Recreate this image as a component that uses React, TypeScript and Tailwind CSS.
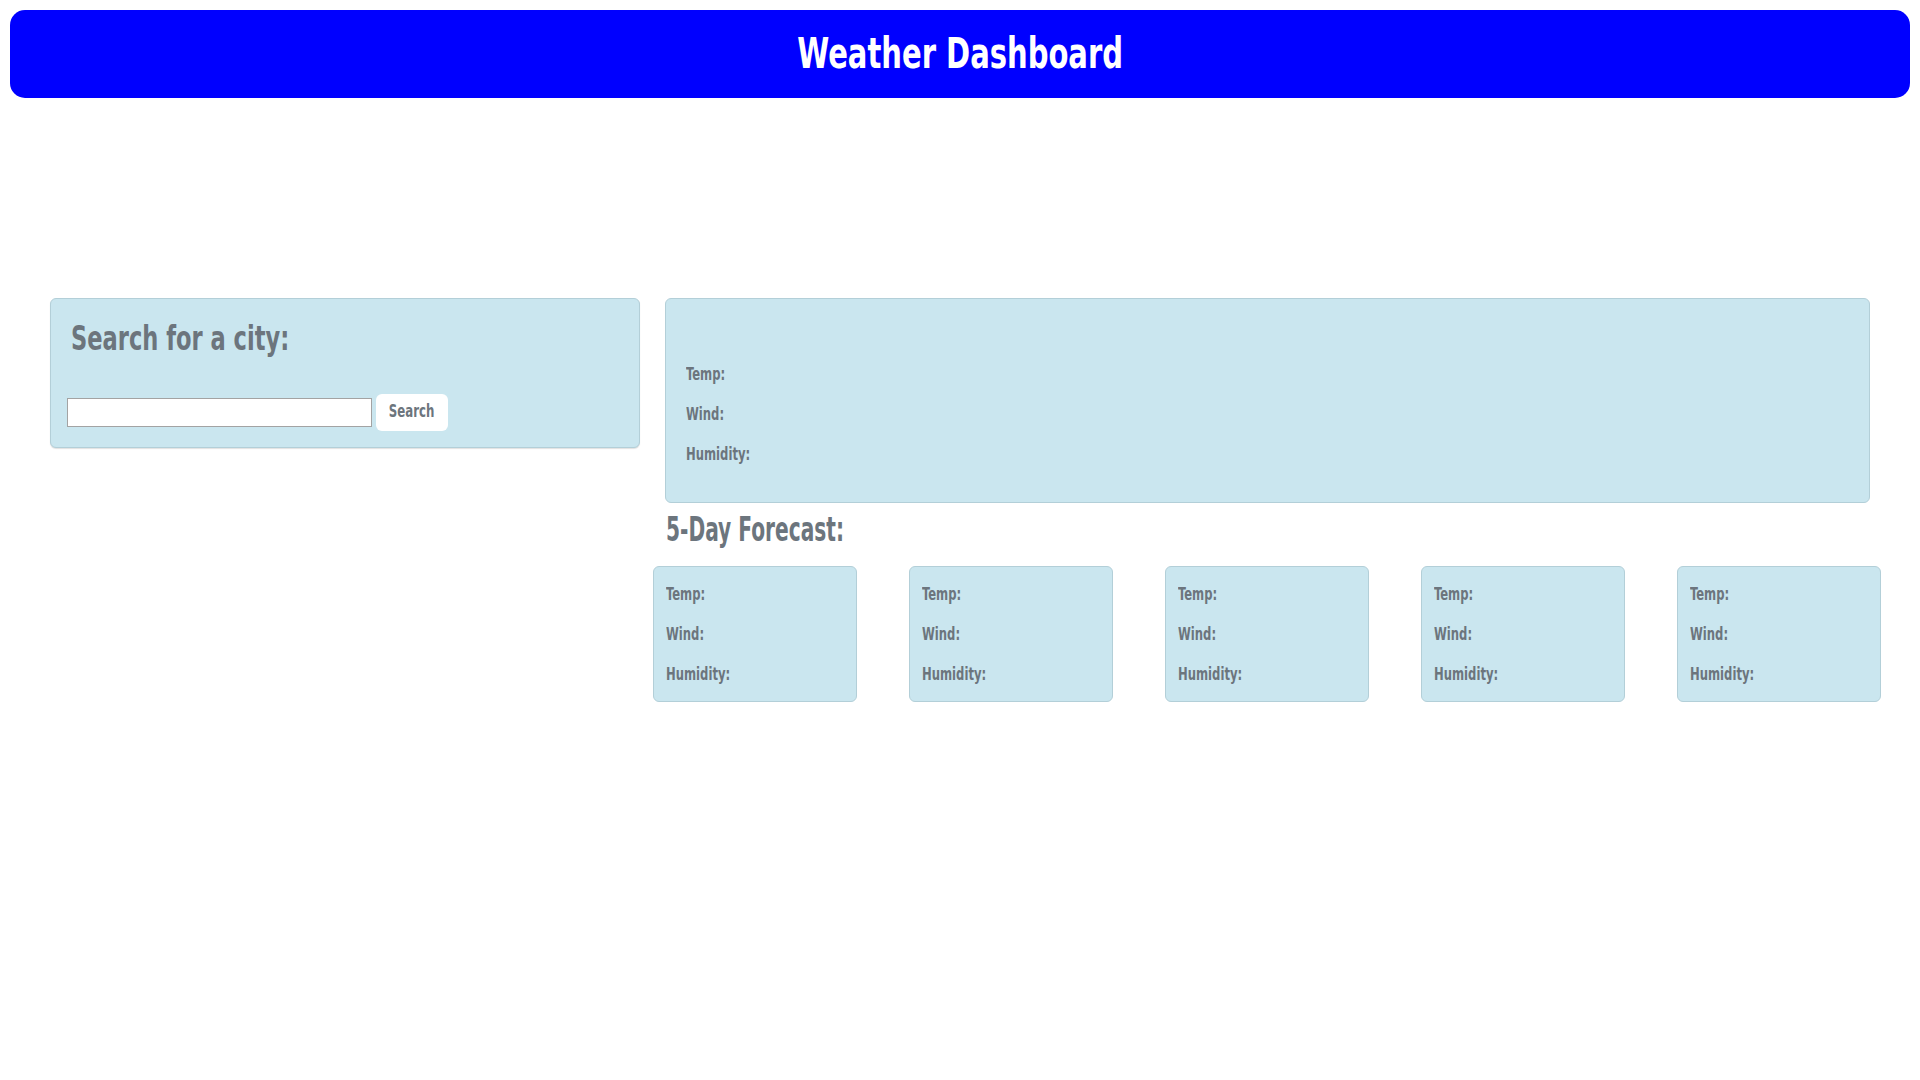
import React from "react";

const font = "font-['Impact','Liberation_Sans_Narrow','DejaVu_Sans_Condensed',sans-serif]";

function Stat({ label, last }: { label: string; last?: boolean }) {
  return (
    <p className={`text-[17px] leading-6 font-bold text-[#6c757d] ${last ? "" : "mb-4"}`}>
      <span className="inline-block origin-left scale-x-[0.76]">{label}</span>
    </p>
  );
}

function ForecastCard() {
  return (
    <div className="w-[204px] h-[136px] rounded-md border border-[#b3cfd8] bg-[#cae6ef] px-3 pt-[15px]">
      <Stat label="Temp:" />
      <Stat label="Wind:" />
      <Stat label="Humidity:" last />
    </div>
  );
}

export default function App() {
  return (
    <div className={`min-h-screen bg-white ${font}`}>
      <header className="mx-[10px] mt-[10px] h-[88px] rounded-[15px] bg-[#0000ff] flex items-center justify-center">
        <h1 className="text-[43px] leading-[1.2] font-bold text-white">
          <span className="inline-block origin-center scale-x-[0.75]">Weather Dashboard</span>
        </h1>
      </header>

      <div className="mt-[200px] flex items-start">
        <div className="ml-[50px] w-[590px] h-[150px] rounded-md border border-[#b3cfd8] bg-[#cae6ef] shadow-[0_1px_1px_rgba(0,0,0,0.12)] pl-4 pt-5">
          <h2 className="pl-1 text-[33px] leading-[1.2] font-bold text-[#6c757d]">
            <span className="inline-block origin-left scale-x-[0.76]">Search for a city:</span>
          </h2>
          <div className="mt-[35px] flex items-center gap-1">
            <input
              type="text"
              className="w-[305px] h-[29px] bg-white border border-[#a3a3a3] outline-none"
            />
            <button className="h-[37px] w-[72px] rounded-md bg-white text-[17px] font-bold text-[#6c757d] flex items-center justify-center">
              <span className="inline-block origin-center scale-x-[0.77]">Search</span>
            </button>
          </div>
        </div>

        <div className="ml-[13px] w-[1228px] flex flex-col">
          <div className="ml-[12px] w-[1205px] h-[205px] rounded-md border border-[#b3cfd8] bg-[#cae6ef] pl-5 pt-[63px]">
            <Stat label="Temp:" />
            <Stat label="Wind:" />
            <Stat label="Humidity:" last />
          </div>
          <h2 className="ml-[13px] mt-[7px] text-[33px] leading-[1.2] font-bold text-[#6c757d]">
            <span className="inline-block origin-left scale-x-[0.68]">5-Day Forecast:</span>
          </h2>
          <div className="mt-[16px] flex justify-between">
            <ForecastCard />
            <ForecastCard />
            <ForecastCard />
            <ForecastCard />
            <ForecastCard />
          </div>
        </div>
      </div>
    </div>
  );
}
